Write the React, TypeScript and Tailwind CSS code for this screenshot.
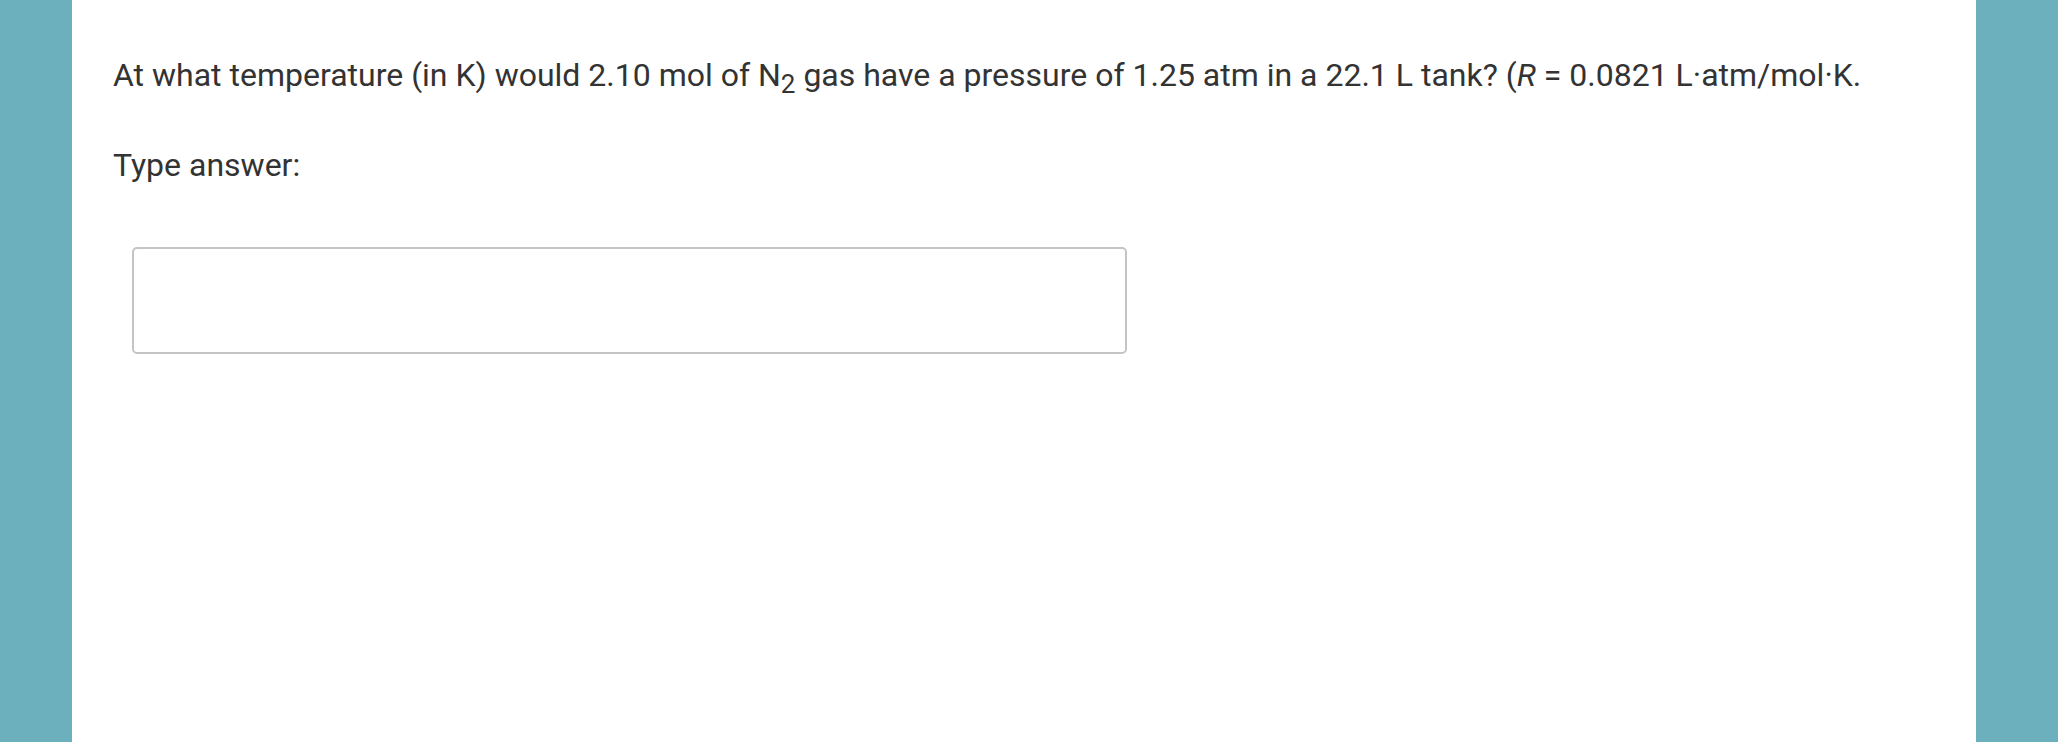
export default function App() {
  return (
    <div className="flex min-h-[742px] w-full bg-[#6cafbd]">
      <div className="ml-[72px] w-[1904px] bg-white pl-[41px] pt-[51px] text-[32px] leading-[48px] text-[#333] font-['Roboto',sans-serif]">
        <p className="whitespace-nowrap">
          At what temperature (in K) would 2.10 mol of N<sub className="text-[26px] leading-none">2</sub> gas have a
          pressure of 1.25 atm in a 22.1 L tank? (<i>R</i> = 0.0821 L·atm/mol·K.
        </p>
        <p className="mt-[42px]">Type answer:</p>
        <div className="mt-[58px] ml-[19px]">
          <input
            type="text"
            className="h-[107px] w-[995px] rounded-[5px] border-2 border-[#c4c4c4] bg-white px-4 text-[32px] outline-none"
          />
        </div>
      </div>
    </div>
  );
}
